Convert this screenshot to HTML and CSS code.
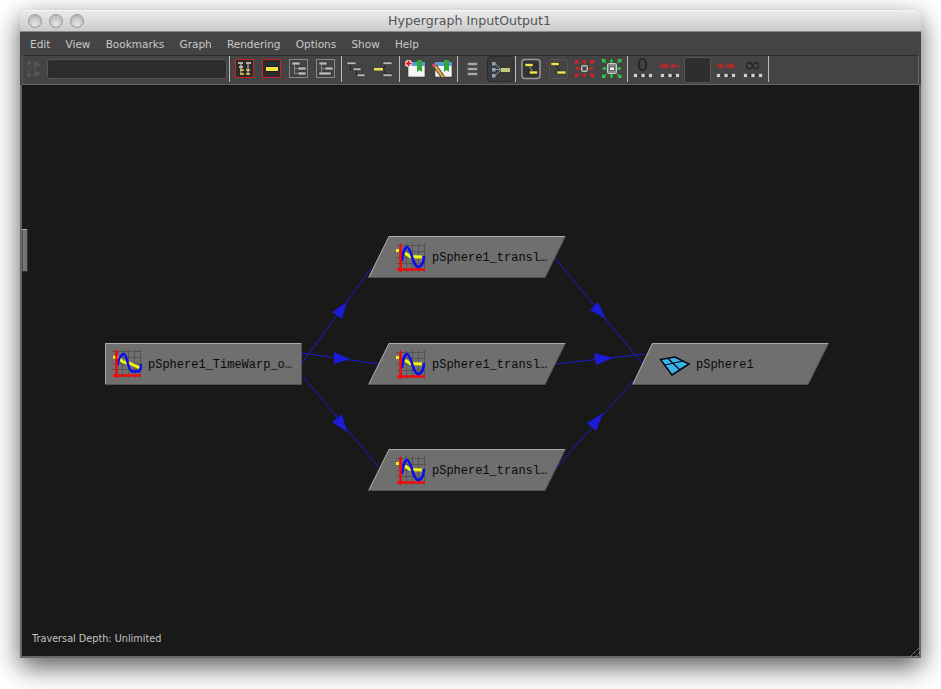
FILE: index.html
```html
<!doctype html>
<html lang="en">
<head>
    <meta charset="UTF-8">
    <title>Hypergraph InputOutput1</title>
    <link rel="stylesheet" href="styles.css">
</head>
<body>
<svg class="defs" width="0" height="0">
    <symbol id="curveA" viewBox="0 0 30 30">
        <path class="grid" d="M4.500 0V29M10.500 0V29M16.500 0V29M22.500 0V29M28.500 0V29M0 2.500H30M0 8.500H30M0 14.500H30M0 20.500H30"/>
        <path class="yel" d="M1 8L7 9L11 13L18 14.500L28 19"/>
        <path class="blu" d="M5 17C7 8 9 5 12 5C15 5 16 22 20 22.500L26 22.500C28 22 29 18 29 15"/>
        <path class="red" d="M4.500 1V29M1 26.500H29"/>
    </symbol>
    <symbol id="curveB" viewBox="0 0 30 30">
        <path class="grid" d="M4.500 0V29M10.500 0V29M16.500 0V29M22.500 0V29M28.500 0V29M0 2.500H30M0 8.500H30M0 14.500H30M0 20.500H30"/>
        <path class="yel" d="M0 7.500H3M9 10L14 13.500L26 14"/>
        <path class="blu" d="M6 18C7 9 9 4 11 4C15 4 17 24 22 24C26 24 28 18 28 13"/>
        <path class="red" d="M4.500 1V29M1 26.500H29"/>
    </symbol>
    <symbol id="bars" viewBox="0 0 20 5">
        <path stroke="#222" d="M3 2.500h14"/>
        <path fill="#cfcfcf" stroke="#2a2a2a" stroke-width=".6" d="M.5 .5h4v4h-4zM8 .5h4v4h-4zM15.500 .5h4v4h-4z"/>
    </symbol>
</svg>

<div class="window">
    <div class="titlebar">
        <div class="lights"><span></span><span></span><span></span></div>
        <div class="title">Hypergraph InputOutput1</div>
    </div>

    <div class="menu">
        <span>Edit</span><span>View</span><span>Bookmarks</span><span>Graph</span><span>Rendering</span><span>Options</span><span>Show</span><span>Help</span>
    </div>

    <div class="toolbar">
        <svg class="grip-icon" viewBox="26 60 17 18">
            <path fill="#555" d="M27 61h4v4h-4zM27 73h4v4h-4zM34 61l7 3.500l-7 3.500zM34 70l7 3.500l-7 3.500z"/>
            <path stroke="#555" stroke-dasharray="2 2" fill="none" d="M28.500 66v6M36 69h-6"/>
        </svg>
        <div class="field"></div>
        <div class="sep"></div>

        <div class="group">
            <svg class="slot" viewBox="231 56 27 28">
                <rect class="redbox" x="235.500" y="59.500" width="18" height="18"/>
                <path stroke="#ddd" stroke-width="1.500" d="M238 63h5M246 63h5M239 67h4"/>
                <path stroke="#e8d838" stroke-width="1.500" d="M240 70h4M240 74h4M246 70h4M246 74h4"/>
                <path stroke="#ccc" d="M241 64v10M248 64v10"/>
            </svg>
            <svg class="slot" viewBox="258 56 27 28">
                <rect class="redbox" x="262.500" y="59.500" width="18" height="18"/>
                <rect x="265.500" y="66.500" width="13" height="5" fill="#efe34a" stroke="#222"/>
            </svg>
            <svg class="slot" viewBox="285 56 27 28">
                <rect class="greybox" x="289.500" y="59.500" width="18" height="18"/>
                <path class="bar" d="M292 62h8v3h-8zM298 67h8v3h-8zM298 72h8v3h-8z"/>
                <path stroke="#888" fill="none" d="M294.500 65v8.500h3M294.500 68.500h3"/>
            </svg>
            <svg class="slot" viewBox="312 56 27 28">
                <rect class="greybox" x="316.500" y="59.500" width="18" height="18"/>
                <path class="bar" d="M319 62h8v3h-8zM325 67h8v3h-8zM319 72h12v3h-12z"/>
                <path stroke="#888" fill="none" d="M321.500 65v7M321.500 68.500h3"/>
            </svg>
        </div>
        <div class="sep"></div>

        <div class="group">
            <svg class="slot" viewBox="343 56 27 28">
                <path stroke="#222" fill="none" d="M350.500 64v5.500h3M356.500 70v5.500h2"/>
                <path class="bar" d="M347 62h9v2.500h-9zM353 68h8v2.500h-8zM357 74h8v2.500h-8z"/>
            </svg>
            <svg class="slot" viewBox="370 56 27 28">
                <path stroke="#222" fill="none" d="M383 69l4-6h-1M383 69l4 6h-1"/>
                <path fill="#efe34a" d="M374 68h9v2.500h-9z"/>
                <path class="bar" d="M383 62h9v2.500h-9zM383 74h9v2.500h-9z"/>
            </svg>
        </div>
        <div class="sep"></div>

        <div class="group group-cal">
            <svg class="slot" viewBox="403 56 27 28">
                <rect x="408" y="62" width="17" height="15" fill="#f4f4f0" stroke="#333" stroke-width=".6"/>
                <rect x="408" y="62" width="17" height="4" fill="#5b9bd8"/>
                <path fill="#2fa83e" d="M417 60h5v12l-2.500-2l-2.500 2z"/>
                <path stroke="#fff" stroke-width="4" d="M408.500 60v7M405 63.500h7"/>
                <path stroke="#e01c1c" stroke-width="2" d="M408.500 60.500v6M405.500 63.500h6"/>
            </svg>
            <svg class="slot" viewBox="430 56 27 28">
                <rect x="435" y="62" width="17" height="15" fill="#f4f4f0" stroke="#333" stroke-width=".6"/>
                <rect x="435" y="62" width="17" height="4" fill="#5b9bd8"/>
                <path fill="#2fa83e" d="M444 60h5v12l-2.500-2l-2.500 2z"/>
                <path stroke="#333" stroke-width="4" d="M435 66l8 11"/>
                <path stroke="#e8a840" stroke-width="2.500" d="M435 66l8 11"/>
                <path stroke="#d84860" stroke-width="3.500" d="M433 64l2 2.500"/>
            </svg>
        </div>
        <div class="sep sep-tight"></div>

        <div class="group">
            <svg class="slot" viewBox="459 56 27 28">
                <path fill="#aaa" stroke="#555" d="M467.500 62.500h10v3h-10zM467.500 67.500h10v3h-10zM467.500 72.500h10v3h-10z"/>
            </svg>
            <div class="slot slot-on">
                <svg viewBox="488 57 25 24">
                    <path stroke="#8a99a8" fill="none" d="M495 63.500l6 6.500M495 69.500h6M495 75.500l6-5.500"/>
                    <path fill="#8fa3b8" d="M492 62h3.500v3.500h-3.500zM492 68h3.500v3.500h-3.500zM492 74h3.500v3.500h-3.500z"/>
                    <path fill="#c4c678" d="M501 68h9v4h-9z"/>
                </svg>
            </div>
        </div>
        <div class="sep"></div>

        <div class="group">
            <svg class="slot" viewBox="517 56 27 28">
                <rect x="522" y="59.500" width="18" height="19" rx="3" fill="#333" stroke="#999" stroke-width="1.500"/>
                <path stroke="#aaa" fill="none" d="M529 66l4 6"/>
                <path fill="#efe34a" stroke="#222" stroke-width=".5" d="M525 63.500h8v3h-8zM529.500 71h8v3h-8z"/>
            </svg>
            <svg class="slot" viewBox="544 56 27 28">
                <rect x="549.500" y="59.500" width="18" height="19" rx="3" fill="none" stroke="#555"/>
                <path stroke="#222" fill="none" d="M556 66l4 6"/>
                <path fill="#efe34a" stroke="#222" stroke-width=".5" d="M551 62.500h8v3h-8zM557 71h9v3h-9z"/>
            </svg>
            <svg class="slot" viewBox="571 56 27 28">
                <rect x="581.500" y="65.500" width="6" height="6" rx="1" fill="#888" stroke="#bbb"/>
                <rect x="583" y="67" width="3" height="3" fill="#444"/>
                <g fill="#e81c1c">
                    <path d="M584.500 59l-2 3h1.250v2h1.500v-2h1.250z"/>
                    <path d="M584.500 78l-2-3h1.250v-2h1.500v2h1.250z"/>
                    <path d="M575 68.500l3-2v1.250h2v1.500h-2v1.250z"/>
                    <path d="M594 68.500l-3-2v1.250h-2v1.500h2v1.250z"/>
                    <path d="M575 60h4l-1.300 1.300l1.800 1.800l-1.200 1.200l-1.800-1.800l-1.500 1.500z"/>
                    <path d="M594 60h-4l1.300 1.300l-1.800 1.800l1.200 1.200l1.800-1.800l1.500 1.500z"/>
                    <path d="M575 77h4l-1.300-1.300l1.800-1.800l-1.200-1.200l-1.800 1.800l-1.500-1.500z"/>
                    <path d="M594 77h-4l1.300-1.300l-1.800-1.800l1.200-1.200l1.800 1.800l1.500-1.500z"/>
                </g>
            </svg>
            <svg class="slot" viewBox="598 56 27 28">
                <rect x="607.500" y="63.500" width="9" height="10" rx="1" fill="#8a8a8a" stroke="#ccc"/>
                <rect x="609.500" y="67" width="5" height="3.500" fill="#eee" stroke="#222" stroke-width=".6"/>
                <g fill="#2ccc44">
                    <path d="M611.500 58.500l-2 3h1.250v1.500h1.500v-1.500h1.250z"/>
                    <path d="M611.500 78.500l-2-3h1.250v-1.500h1.500v1.500h1.250z"/>
                    <path d="M602 68.500l3-2v1.250h1.500v1.500h-1.500v1.250z"/>
                    <path d="M621.500 68.500l-3-2v1.250h-1.500v1.500h1.500v1.250z"/>
                    <path d="M602 59h4l-1.300 1.300l1.800 1.800l-1.200 1.200l-1.800-1.800l-1.500 1.500z"/>
                    <path d="M621.500 59h-4l1.300 1.300l-1.800 1.800l1.200 1.200l1.800-1.800l1.500 1.500z"/>
                    <path d="M602 78h4l-1.300-1.300l1.800-1.800l-1.200-1.200l-1.800 1.800l-1.500-1.500z"/>
                    <path d="M621.500 78h-4l1.300-1.300l-1.800-1.800l1.200-1.200l1.800 1.800l1.500-1.500z"/>
                </g>
            </svg>
        </div>
        <div class="sep"></div>

        <div class="group">
            <div class="slot slot-tool">
                <span class="tool-glyph tool-zero">0</span>
                <svg class="tool-bars" viewBox="0 0 20 5"><use href="#bars"/></svg>
            </div>
            <div class="slot slot-tool">
                <svg class="tool-arrows" viewBox="0 0 20 8"><path fill="#b02a2a" d="M10 4L3.500 .5v2H0v3h3.500v2zM18 4L11 .5v7zM18 3h2v2h-2z"/></svg>
                <svg class="tool-bars" viewBox="0 0 20 5"><use href="#bars"/></svg>
            </div>
            <div class="slot slot-wide"><div class="depth"></div></div>
            <div class="slot slot-tool">
                <svg class="tool-arrows" viewBox="0 0 20 8"><path fill="#b02a2a" d="M0 4l6.500-3.500v7zM7 3h2v2h-2zM20 4l-6.500-3.500v2H10v3h3.500v2z"/></svg>
                <svg class="tool-bars" viewBox="0 0 20 5"><use href="#bars"/></svg>
            </div>
            <div class="slot slot-tool">
                <span class="tool-glyph tool-inf">∞</span>
                <svg class="tool-bars" viewBox="0 0 20 5"><use href="#bars"/></svg>
            </div>
        </div>
        <div class="sep"></div>
    </div>

    <div class="canvas">
        <svg class="graph" viewBox="22 85 897 571" width="897" height="571">
            <!-- edges -->
            <g class="edges">
                <path d="M302 363L370 270"/>
                <path d="M302 353L378 364"/>
                <path d="M302 375L380 469"/>
                <path d="M554 257L642 363"/>
                <path d="M555 364L645 354"/>
                <path d="M556 468L634 380"/>
            </g>
            <g class="arrows">
                <path d="M332 312L347 302L342 319z"/>
                <path d="M334 352L350 359L334 364z"/>
                <path d="M342 414L332 422L347 432z"/>
                <path d="M598 302L590 310L606 319z"/>
                <path d="M594 353L613 358L596 365z"/>
                <path d="M603 413L587 423L596 431z"/>
            </g>

            <!-- nodes -->
            <g class="node">
                <path class="face" d="M105 343H301.500V385H105z"/>
                <path class="hi" d="M105.500 385V343.500H301"/>
                <path class="lo" d="M105 384.500H301.500V343"/>
                <use href="#curveA" x="112" y="349" width="30" height="30"/>
                <text x="148" y="368">pSphere1_TimeWarp_o…</text>
            </g>
            <g class="node">
                <path class="face" d="M389 236H565.500L545 278H368z"/>
                <path class="hi" d="M368.500 278L389 236.500H565"/>
                <path class="lo" d="M368 277.500H545L565.500 236"/>
                <use href="#curveB" x="396" y="243" width="30" height="30"/>
                <text x="432" y="261">pSphere1_transl…</text>
            </g>
            <g class="node">
                <path class="face" d="M389 343H565.500L545 385H368z"/>
                <path class="hi" d="M368.500 385L389 343.500H565"/>
                <path class="lo" d="M368 384.500H545L565.500 343"/>
                <use href="#curveB" x="396" y="350" width="30" height="30"/>
                <text x="432" y="368">pSphere1_transl…</text>
            </g>
            <g class="node">
                <path class="face" d="M389 449H565.500L545 491H368z"/>
                <path class="hi" d="M368.500 491L389 449.500H565"/>
                <path class="lo" d="M368 490.500H545L565.500 449"/>
                <use href="#curveB" x="396" y="456" width="30" height="30"/>
                <text x="432" y="474">pSphere1_transl…</text>
            </g>
            <g class="node">
                <path class="face" d="M652 343H829L808 385H632z"/>
                <path class="hi" d="M632.500 385L652.500 343.500H828.500"/>
                <path class="lo" d="M632 384.500H808L828.500 343"/>
                <path fill="#38b4e6" stroke="#050515" stroke-width="1.500" d="M660.500 359.500L675 357L689 364L672 375z"/>
                <path fill="none" stroke="#050515" stroke-width="1.200" d="M668 358.500L680 370M665 365L683 361"/>
                <text x="696" y="368">pSphere1</text>
            </g>

            <!-- side handle -->
            <path fill="#747474" stroke="#333" d="M22 229.500H27.500V271.500H22z"/>
            <path stroke="#aaa" d="M22 229.500H27"/>
        </svg>
        <div class="status">Traversal Depth: Unlimited</div>
        <svg class="resize" viewBox="0 0 10 10">
            <path d="M0 10L10 0M5 10L10 5"/>
        </svg>
    </div>
</div>
</body>
</html>
```

FILE: styles.css
```css
*{padding: 0; margin: 0; box-sizing: border-box;}
html, body{background: #fff; overflow: hidden;}
body{height: 689px; padding: 10px 20px 31px; font-family: "DejaVu Sans", "Liberation Sans", sans-serif;}
.defs{position: absolute;}

.window{height: 648px; display: flex; flex-direction: column; background: #444; border-radius: 5px 5px 0 0; box-shadow: 0 9px 26px rgba(0,0,0,.65);}

.titlebar{height: 22px; flex: none; display: flex; align-items: center; position: relative; background: linear-gradient(#ececec, #cbcbcb); border-radius: 5px 5px 0 0; border-bottom: 1px solid #8a8a8a; box-shadow: inset 0 1px 0 #f6f6f6;}
.lights{display: flex; gap: 7px; padding-left: 8px;}
.lights span{width: 14px; height: 14px; border-radius: 50%; background: radial-gradient(circle at 50% 75%, #e8e8e8, #bcbcbc 70%); border: 1px solid #9a9a9a;}
.title{flex: 1; text-align: center; font-size: 12.600px; color: #555; margin-left: -66px;}

.menu{height: 23px; flex: none; display: flex; align-items: center; gap: 15.200px; padding-left: 10px; font-size: 10.500px; color: #c8c8c8; background: #444;}

.toolbar{height: 30px; flex: none; margin: 0 2px; display: flex; align-items: flex-start; background: #444; border-top: 1px solid #2b2b2b; border-bottom: 1px solid #666; border-left: 1px solid #555; border-right: 1px solid #666;}
.grip-icon{width: 17px; height: 18px; margin: 4px 0 0 3px; flex: none;}
.field{width: 180px; height: 20px; margin: 3px 0 0 4px; flex: none; background: #2c2c2c; border: 1px solid #555; border-radius: 3px;}
.sep{width: 1px; height: 26px; margin: 0 1px 0 2px; flex: none; background: #bbb;}
.sep-tight{margin-left: 0;}
.group{display: flex; flex: none;}
.group-cal{margin-left: 2px;}
.slot{display: block; width: 27px; height: 28px; flex: none; position: relative;}
.slot-on svg{display: block; width: 25px; height: 24px; margin: 1px 0 0 2px; background: #3a3a3a; border-radius: 3px; outline: 1px solid #2b2b2b;}
.slot-wide{width: 29px;}
.depth{width: 27px; height: 26px; margin: 1px 0 0 1px; background: #2e2e2e; border: 1px solid #555; border-radius: 3px;}
.slot-tool{display: flex; flex-direction: column; align-items: center;}
.tool-glyph{height: 16px; line-height: 16px; color: #222; font-family: "DejaVu Sans", sans-serif; flex: none;}
.tool-zero{font-size: 17px; margin-top: 1px;}
.tool-inf{font-size: 21px; margin-top: 1px;}
.tool-arrows{display: block; width: 20px; height: 8px; margin: 6px 0 3px; flex: none;}
.tool-bars{display: block; width: 20px; height: 5px; flex: none;}

.redbox{fill: #2b2b2b; stroke: #d02020;}
.greybox{fill: none; stroke: #888;}
.bar{fill: #b8b8b8; stroke: #222; stroke-width: .5;}

.canvas{flex: 1; position: relative; background: #191919; border: 2px solid #666; border-top: 0;}
.graph{position: absolute; left: 0; top: 0; display: block;}
.edges path{stroke: #1a1ad2; stroke-width: 1; fill: none;}
.arrows path{fill: #1c1cd6;}

.node .face{fill: #6f6f6f;}
.node .hi{fill: none; stroke: #ababab;}
.node .lo{fill: none; stroke: #535353;}
.node text{font-family: "Liberation Mono", monospace; font-size: 12px; fill: #0a0a0a;}

.grid{fill: none; stroke: #555; stroke-width: 1;}
.red{fill: none; stroke: #f00a0a; stroke-width: 2.500;}
.blu{fill: none; stroke: #0c0cf0; stroke-width: 2.500;}
.yel{fill: none; stroke: #f4f40c; stroke-width: 3;}

.status{position: absolute; left: 10px; bottom: 10px; font-size: 9.700px; line-height: 14px; color: #c4c4c4;}
.resize{position: absolute; right: -1px; bottom: -1px; width: 10px; height: 10px;}
.resize path{fill: none; stroke: #c8c8c8; stroke-width: 1; stroke-dasharray: 1 1;}
```
